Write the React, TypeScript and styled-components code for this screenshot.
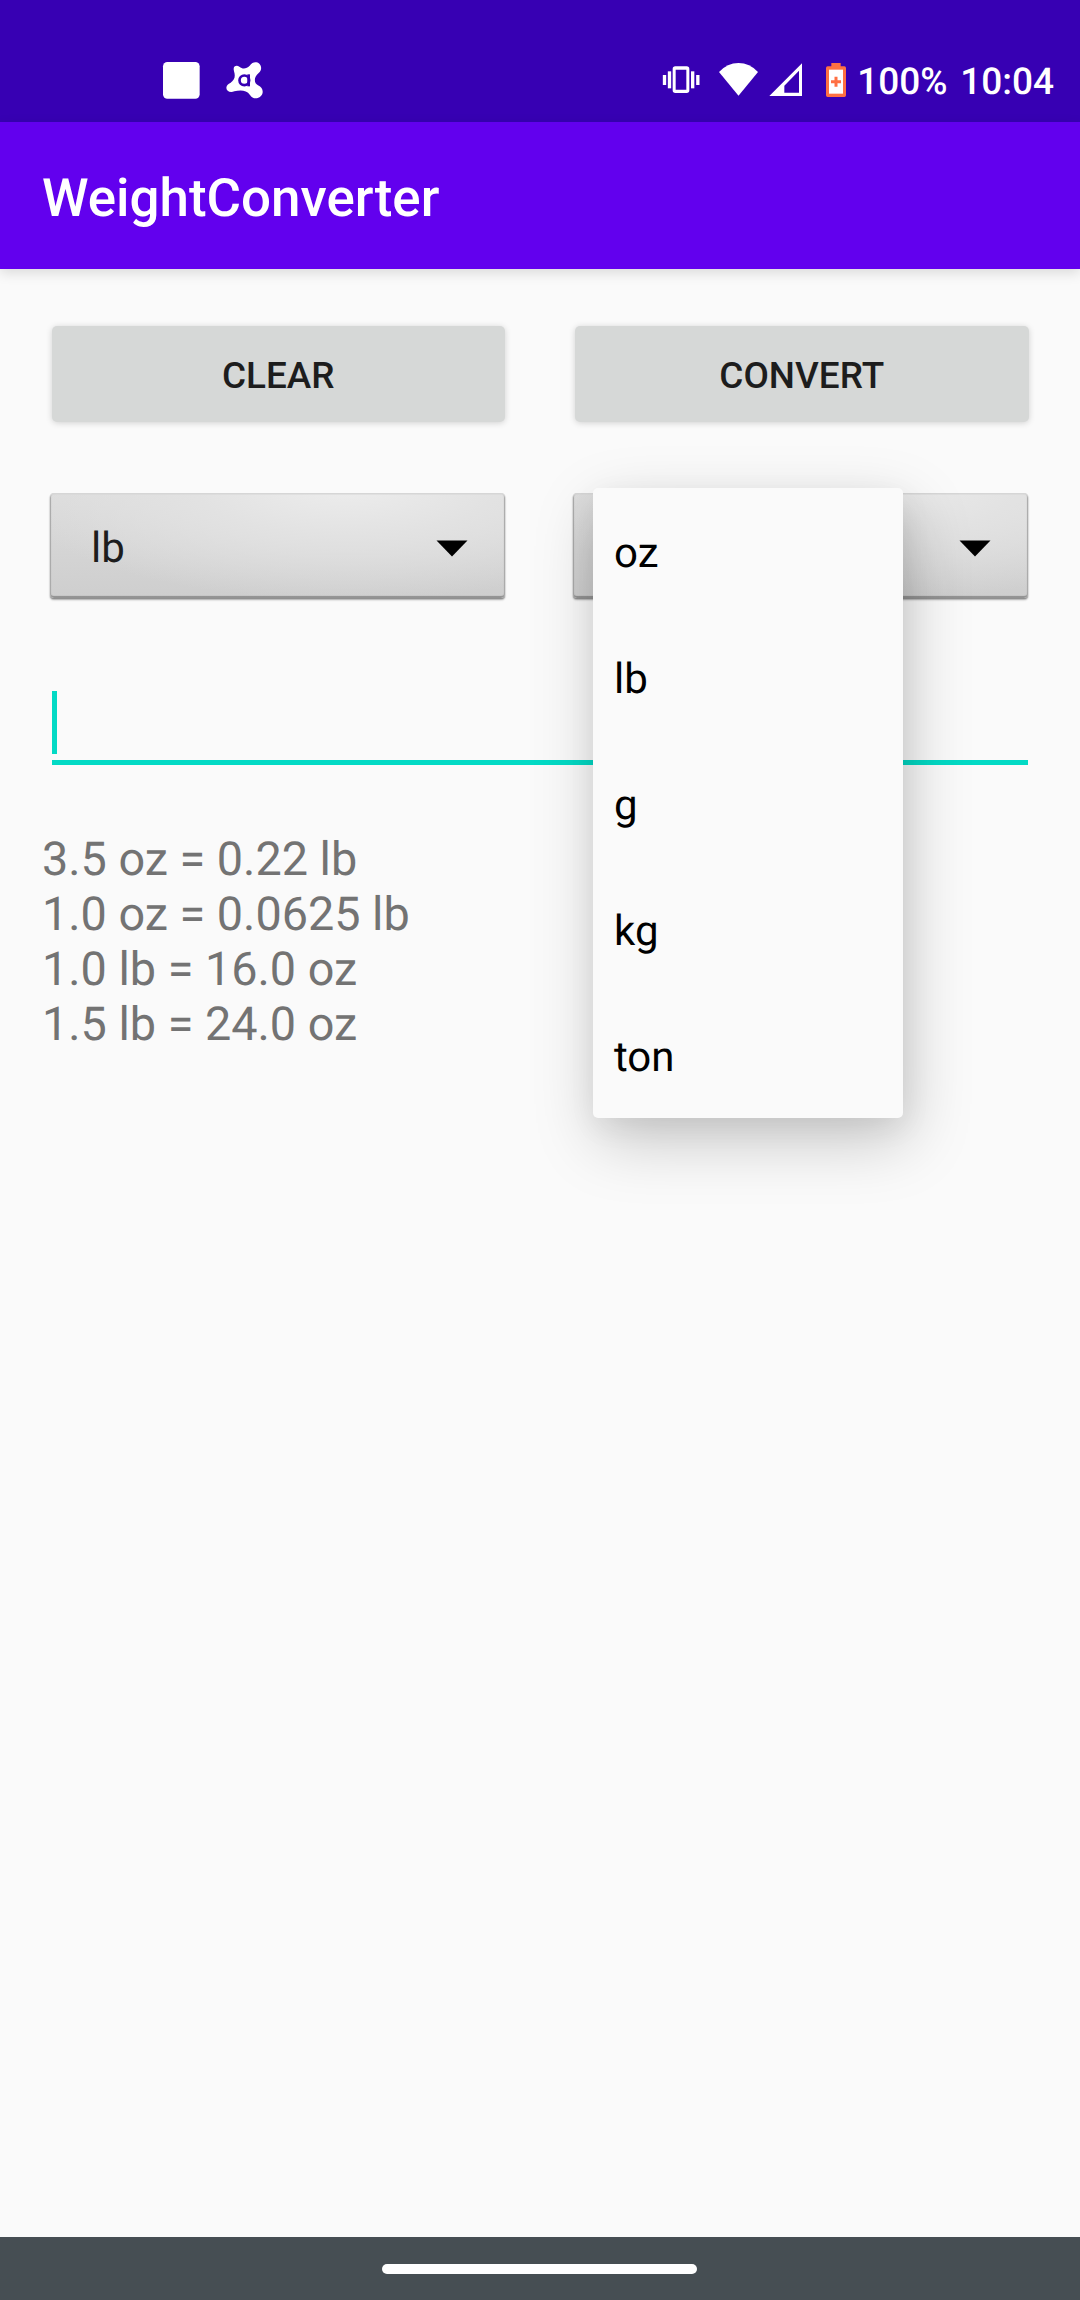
import React from "react";
import styled, { createGlobalStyle } from "styled-components";

const GlobalStyle = createGlobalStyle`
  *, *::before, *::after { box-sizing: border-box; }
  body {
    margin: 0;
    background: #fafafa;
    font-family: Roboto, "Noto Sans", sans-serif;
    text-rendering: geometricPrecision;
  }
`;

const Screen = styled.div`
  display: flex;
  flex-direction: column;
  width: 1080px;
  height: 2300px;
  overflow: hidden;
  background: #fafafa;
`;

const StatusBar = styled.header`
  display: flex;
  justify-content: space-between;
  height: 122px;
  flex: none;
  padding: 40px 26px 0 140px;
  background: #3700b3;
  color: #fff;
`;

const StatusGroup = styled.div`
  display: flex;
  height: 82px;
`;

const Glyphs = styled.svg`
  display: block;
  height: 82px;
`;

const StatusText = styled.span<{ $gap: number }>`
  margin-left: ${(p) => p.$gap}px;
  padding-top: 21px;
  font-size: 37px;
  line-height: 44px;
  font-weight: 500;
  white-space: nowrap;
`;

const AppBar = styled.div`
  display: flex;
  align-items: center;
  height: 147px;
  flex: none;
  padding: 5px 42px 0;
  background: #6200ee;
  box-shadow: 0 4px 12px rgba(0, 0, 0, 0.13);
`;

const Title = styled.h1`
  margin: 0;
  color: #fff;
  font-size: 52.9px;
  font-weight: 500;
  line-height: 62px;
`;

const Content = styled.main`
  display: flex;
  flex-direction: column;
  flex: 1;
  padding: 57px 42px 0;
`;

const Row = styled.div<{ $top?: number; $left: number; $right: number; $gap: number }>`
  display: grid;
  grid-template-columns: 1fr 1fr;
  gap: ${(p) => p.$gap}px;
  margin: ${(p) => p.$top ?? 0}px ${(p) => p.$right}px 0 ${(p) => p.$left}px;
`;

const Button = styled.button`
  height: 96px;
  padding: 3px 0 0;
  border: 0;
  border-radius: 5px;
  background: #d6d8d7;
  box-shadow: 0 1px 6px rgba(0, 0, 0, 0.17);
  color: #1d1d1d;
  font: 500 36.9px/44px Roboto, sans-serif;
`;

const SpinnerCell = styled.div`
  position: relative;
`;

const Spinner = styled.div`
  display: flex;
  align-items: center;
  height: 105px;
  padding: 5px 37px 0 41px;
  border-radius: 4px;
  color: #1d1d1d;
  font-size: 42px;
  line-height: 50px;
  background: radial-gradient(ellipse 75% 110% at 65% -8%, #ededed 0%, #e2e2e2 45%, rgba(218, 218, 218, 0) 100%),
    linear-gradient(#dcdcdc, #cecece);
  box-shadow: inset 0 1.5px 0 #d6d6d6, inset 1px 0 1px #a8a8a8, inset -1px 0 1px #a8a8a8, inset 0 -2px 1px #8e8e8e,
    0 1px 1px #8c8c8c, 0 2px 2px rgba(0, 0, 0, 0.3);
`;

const SpinnerValue = styled.span`
  padding-top: 2px;
`;

const Arrow = styled.svg`
  display: block;
  width: 32px;
  height: 17px;
  margin-left: auto;
`;

const Menu = styled.ul`
  position: absolute;
  z-index: 2;
  top: -5px;
  left: 20px;
  width: 310px;
  margin: 0;
  padding: 0;
  list-style: none;
  border-radius: 5px;
  background: #fafafa;
  box-shadow: 5px 22px 64px rgba(0, 0, 0, 0.21), 2px 9px 30px rgba(0, 0, 0, 0.06);
`;

const MenuItem = styled.li`
  display: flex;
  align-items: center;
  height: 126px;
  padding: 5px 21px 0;
  color: #000;
  font-size: 42px;
  line-height: 50px;
`;

const Field = styled.div`
  display: flex;
  height: 74px;
  margin: 93px 10px 0;
  border-bottom: 5px solid #03dac5;
`;

const Caret = styled.span`
  width: 5px;
  height: 63px;
  background: #03dac5;
`;

const Results = styled.div`
  margin-top: 68px;
  color: #737373;
  font-size: 46.75px;
  line-height: 55px;
`;

const NavBar = styled.footer`
  display: flex;
  justify-content: center;
  height: 63px;
  flex: none;
  padding: 27px 1px 0 0;
  background: #464e53;
`;

const NavPill = styled.div`
  width: 315px;
  height: 10px;
  border-radius: 5px;
  background: #fff;
`;

const units = ["oz", "lb", "g", "kg", "ton"];
const history = ["3.5 oz = 0.22 lb", "1.0 oz = 0.0625 lb", "1.0 lb = 16.0 oz", "1.5 lb = 24.0 oz"];

const DropArrow = () => (
  <Arrow viewBox="0 0 32 17">
    <path d="M0.5 0.5H31.5L16 16.5Z" fill="#000" />
  </Arrow>
);

const NotificationIcons = () => (
  <Glyphs viewBox="0 0 390 246" width="130">
    <rect x="69" y="66" width="110" height="110" rx="13" fill="#fff" />
    <path
      fill="#fff"
      d="M281 88C280 78 290 75 298 80C308 88 319 87 329 77C337 65 350 64 358 71C366 79 365 92 356 99C340 112 342 130 354 136C370 143 372 159 362 169C351 179 337 176 330 165C319 149 300 150 283 154C270 159 259 153 259 143C260 136 265 132 271 129C284 120 287 109 282 94Z"
    />
    <circle cx="313" cy="121" r="14.5" fill="none" stroke="#3700b3" strokeWidth="8" />
    <rect x="322" y="103" width="8" height="36" fill="#3700b3" />
  </Glyphs>
);

const SystemIcons = () => (
  <Glyphs viewBox="0 0 630 246" width="210">
    <g fill="#fff">
      <path fillRule="evenodd" d="M106 79H140Q148 79 148 87V151Q148 159 140 159H106Q98 159 98 151V87Q98 79 106 79ZM107 89V149H139V89Z" />
      <rect x="83.500" y="94" width="10" height="51" />
      <rect x="68.500" y="105" width="10" height="30" />
      <rect x="153" y="94" width="10" height="51" />
      <rect x="168.500" y="105" width="10" height="30" />
      <path d="M237 96Q262 69 295.500 69Q329 69 354 96L295.500 167Z" />
      <path fillRule="evenodd" d="M388 168L486 70V168ZM433 158H477V92L433 137Z" />
    </g>
    <path fill="#ff7043" d="M574 69H602V79H613Q618 79 618 84V166Q618 171 613 171H563Q558 171 558 166V84Q558 79 563 79H574Z" />
    <rect x="567" y="89" width="42" height="72" fill="#fff" />
    <path d="M588 110V140M573 125H603" stroke="#ff7043" strokeWidth="9" />
  </Glyphs>
);

export default function App() {
  return (
    <>
      <GlobalStyle />
      <Screen>
        <StatusBar>
          <StatusGroup>
            <NotificationIcons />
          </StatusGroup>
          <StatusGroup>
            <SystemIcons />
            <StatusText $gap={7}>100%</StatusText>
            <StatusText $gap={12.5}>10:04</StatusText>
          </StatusGroup>
        </StatusBar>
        <AppBar>
          <Title>WeightConverter</Title>
        </AppBar>
        <Content>
          <Row $left={9.5} $right={9.5} $gap={70}>
            <Button>CLEAR</Button>
            <Button>CONVERT</Button>
          </Row>
          <Row $top={71} $left={8} $right={10} $gap={68}>
            <SpinnerCell>
              <Spinner>
                <SpinnerValue>lb</SpinnerValue>
                <DropArrow />
              </Spinner>
            </SpinnerCell>
            <SpinnerCell>
              <Spinner>
                <DropArrow />
              </Spinner>
              <Menu>
                {units.map((unit) => (
                  <MenuItem key={unit}>{unit}</MenuItem>
                ))}
              </Menu>
            </SpinnerCell>
          </Row>
          <Field>
            <Caret />
          </Field>
          <Results>
            {history.map((line) => (
              <div key={line}>{line}</div>
            ))}
          </Results>
        </Content>
        <NavBar>
          <NavPill />
        </NavBar>
      </Screen>
    </>
  );
}
